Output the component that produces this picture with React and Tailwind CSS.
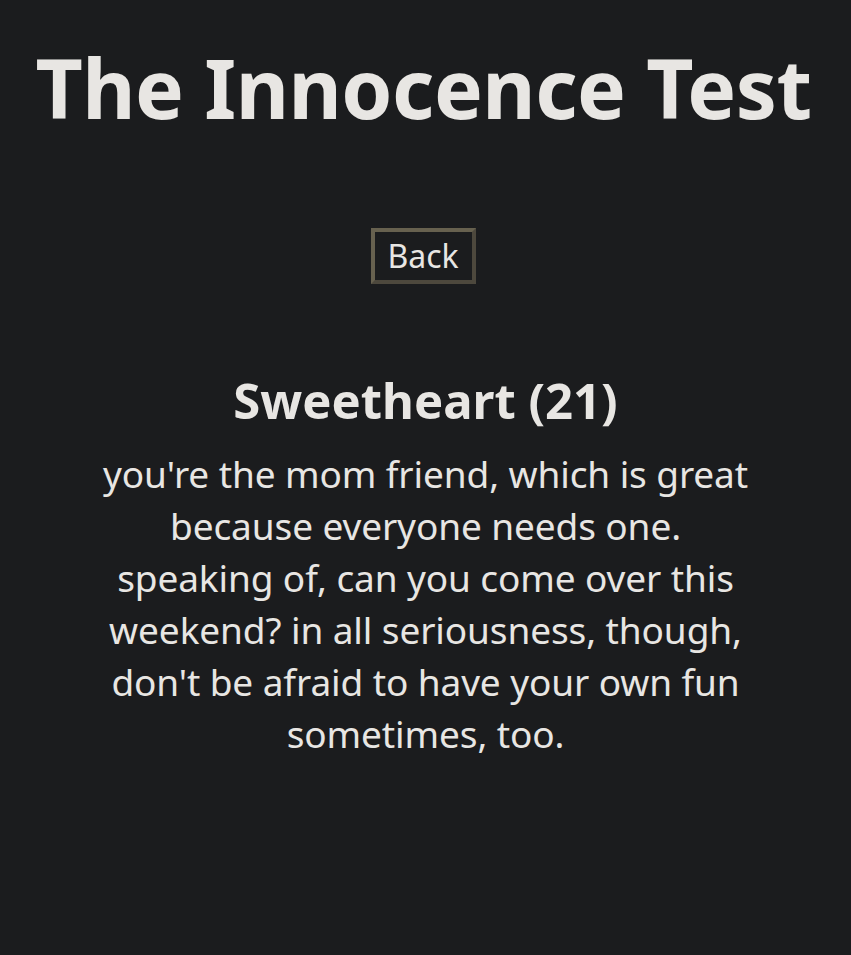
export default function App() {
  return (
    <div className="min-h-[955px] bg-[#1b1c1e] text-[#e8e6e3] text-center" style={{ fontFamily: '"Noto Sans", "Open Sans", sans-serif' }}>
      <h1 className="text-[82px] font-bold leading-none pt-[46px] tracking-[-0.5px] pr-[4px]">The Innocence Test</h1>
      <div className="mt-[100px] flex justify-center">
        <button className="text-[32px] leading-[38px] pl-[12px] pr-[13px] py-[5px] border-[4px] border-t-[#67614f] border-l-[#67614f] border-b-[#4d483d] border-r-[#4d483d] bg-[#1b1c1e] text-[#e8e6e3] mr-[4px]">Back</button>
      </div>
      <h2 className="mt-[86px] text-[49px] font-bold leading-[60px]">Sweetheart (21)</h2>
      <p className="mx-auto mt-[18px] w-[720px] text-[37px] leading-[52px] tracking-[-0.1px]">
        you're the mom friend, which is great<br />
        because everyone needs one.<br />
        speaking of, can you come over this<br />
        weekend? in all seriousness, though,<br />
        don't be afraid to have your own fun<br />
        sometimes, too.
      </p>
    </div>
  );
}
